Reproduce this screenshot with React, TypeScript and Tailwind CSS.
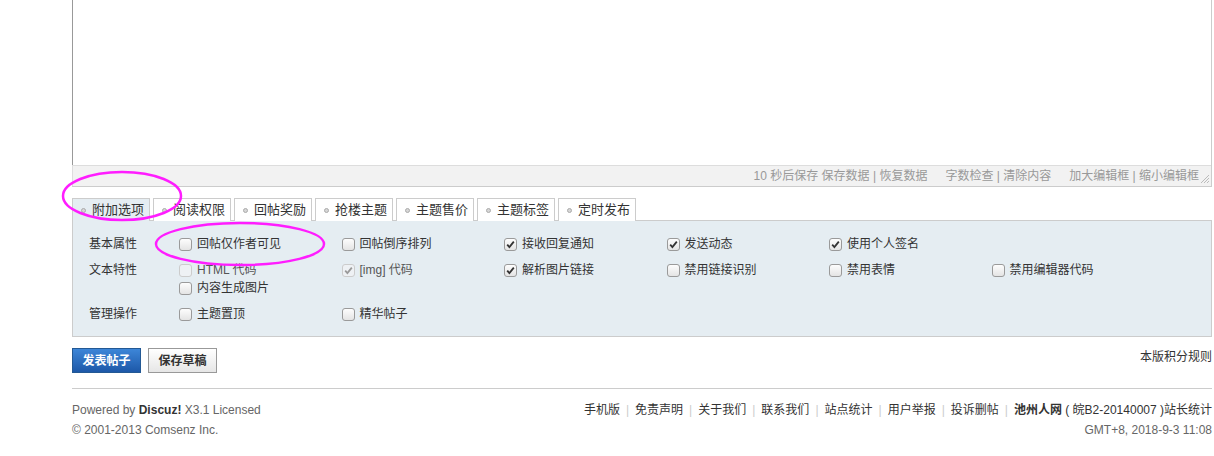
import React from 'react';

const font = "font-['Liberation_Sans','Noto_Sans_CJK_SC',sans-serif]";

const tabs = ['附加选项', '阅读权限', '回帖奖励', '抢楼主题', '主题售价', '主题标签', '定时发布'];

type Opt = { label: string; checked?: boolean; disabled?: boolean };

const rows: { title: string; items: Opt[] }[] = [
  {
    title: '基本属性',
    items: [
      { label: '回帖仅作者可见' },
      { label: '回帖倒序排列' },
      { label: '接收回复通知', checked: true },
      { label: '发送动态', checked: true },
      { label: '使用个人签名', checked: true },
    ],
  },
  {
    title: '文本特性',
    items: [
      { label: 'HTML 代码', disabled: true },
      { label: '[img] 代码', checked: true, disabled: true },
      { label: '解析图片链接', checked: true },
      { label: '禁用链接识别' },
      { label: '禁用表情' },
      { label: '禁用编辑器代码' },
      { label: '内容生成图片' },
    ],
  },
  {
    title: '管理操作',
    items: [{ label: '主题置顶' }, { label: '精华帖子' }],
  },
];

const links = ['手机版', '免责声明', '关于我们', '联系我们', '站点统计', '用户举报', '投诉删帖'];

function Check({ checked, disabled }: { checked?: boolean; disabled?: boolean }) {
  return (
    <span
      className={
        'flex h-[13px] w-[13px] shrink-0 items-center justify-center rounded-[3px] border ' +
        (disabled ? 'border-[#ccc] bg-[#eef1f4]' : 'border-[#9a9a9a] bg-gradient-to-b from-[#fdfdfd] to-[#e4e4e4]')
      }
    >
      {checked && (
        <svg width="9" height="9" viewBox="0 0 9 9">
          <path
            d="M1.2 4.6 L3.4 7 L7.8 1.6"
            fill="none"
            stroke={disabled ? '#999' : '#333'}
            strokeWidth="1.8"
          />
        </svg>
      )}
    </span>
  );
}

export default function App() {
  return (
    <div className={`relative h-[456px] w-[1214px] overflow-hidden bg-white text-[12px] text-[#333] ${font}`}>
      <div className="ml-[72px] w-[1140px]">
        {/* editor */}
        <div className="border-r border-b border-[#ccc]">
          <div className="h-[165px] border-l border-[#999] bg-white" />
          <div className="flex h-[21px] items-center justify-end border-t border-l border-[#ddd] bg-[#f2f2f2] pr-[12px] text-[#999]">
            <span>10 秒后保存 保存数据 | 恢复数据</span>
            <span className="ml-[18px]">字数检查 | 清除内容</span>
            <span className="ml-[18px]">加大编辑框 | 缩小编辑框</span>
            <svg className="absolute left-[1200px] top-[174px]" width="10" height="10" viewBox="0 0 10 10">
              <path d="M9 1 L1 9 M9 4 L4 9 M9 7 L7 9" stroke="#bbb" strokeWidth="1" />
            </svg>
          </div>
        </div>

        {/* tabs */}
        <div className="mt-[11px] flex h-[22px] gap-[3px]">
          {tabs.map((t, i) => (
            <div
              key={t}
              className={
                'flex h-[23px] w-[78px] items-center border border-b-0 border-[#ccc] pl-[8px] text-[13px] ' +
                (i === 0 ? 'relative z-10 bg-[#e5edf2]' : 'bg-white')
              }
            >
              <span className="mr-[6px] h-[5px] w-[5px] rounded-full border border-[#aaa] bg-[#d6d6d6]" />
              {t}
            </div>
          ))}
        </div>

        {/* options panel */}
        <div className="flex flex-col gap-[8px] border border-[#ccc] bg-[#e5edf2] pt-[14px] pb-[13px] pl-[16px]">
          {rows.map((r) => (
            <div key={r.title} className="flex">
              <div className="h-[18px] w-[90px] shrink-0 leading-[18px] text-[12px]">{r.title}</div>
              <div className="flex w-[1010px] flex-wrap">
                {r.items.map((o) => (
                  <label key={o.label} className="flex h-[18px] w-[162.5px] items-center gap-[5px]">
                    <Check checked={o.checked} disabled={o.disabled} />
                    <span className={o.disabled ? 'text-[#555]' : ''}>{o.label}</span>
                  </label>
                ))}
              </div>
            </div>
          ))}
        </div>

        {/* buttons */}
        <div className="mt-[11px] flex items-center justify-between">
          <div className="flex gap-[7px]">
            <button className="h-[25px] w-[69px] border border-[#235994] bg-gradient-to-b from-[#3d86d8] to-[#1d58a8] font-bold text-white">
              发表帖子
            </button>
            <button className="h-[25px] w-[69px] border border-[#999] bg-gradient-to-b from-[#fff] to-[#e6e6e6] font-bold text-[#333]">
              保存草稿
            </button>
          </div>
          <span className="mt-[-8px]">本版积分规则</span>
        </div>

        <div className="mt-[15px] border-t border-[#ccc]" />

        {/* footer */}
        <div className="mt-[11px] flex justify-between leading-[20px]">
          <div className="text-[#666]">
            <div>
              Powered by <b className="text-[#333]">Discuz!</b> X3.1 Licensed
            </div>
            <div>© 2001-2013 Comsenz Inc.</div>
          </div>
          <div className="text-right">
            <div>
              {links.map((l) => (
                <span key={l}>
                  {l}
                  <span className="mx-[6px] text-[#ccc]">|</span>
                </span>
              ))}
              <b>池州人网</b> ( 皖B2-20140007 )站长统计
            </div>
            <div className="text-[#666]">GMT+8, 2018-9-3 11:08</div>
          </div>
        </div>
      </div>

      {/* annotation marks */}
      <svg className="pointer-events-none absolute left-0 top-0 z-20" width="1214" height="456">
        <ellipse cx="122" cy="196" rx="59" ry="24" fill="none" stroke="#ff1dff" strokeWidth="2.5" />
        <ellipse cx="240" cy="244" rx="84" ry="21" fill="none" stroke="#ff1dff" strokeWidth="2.5" />
      </svg>
    </div>
  );
}
